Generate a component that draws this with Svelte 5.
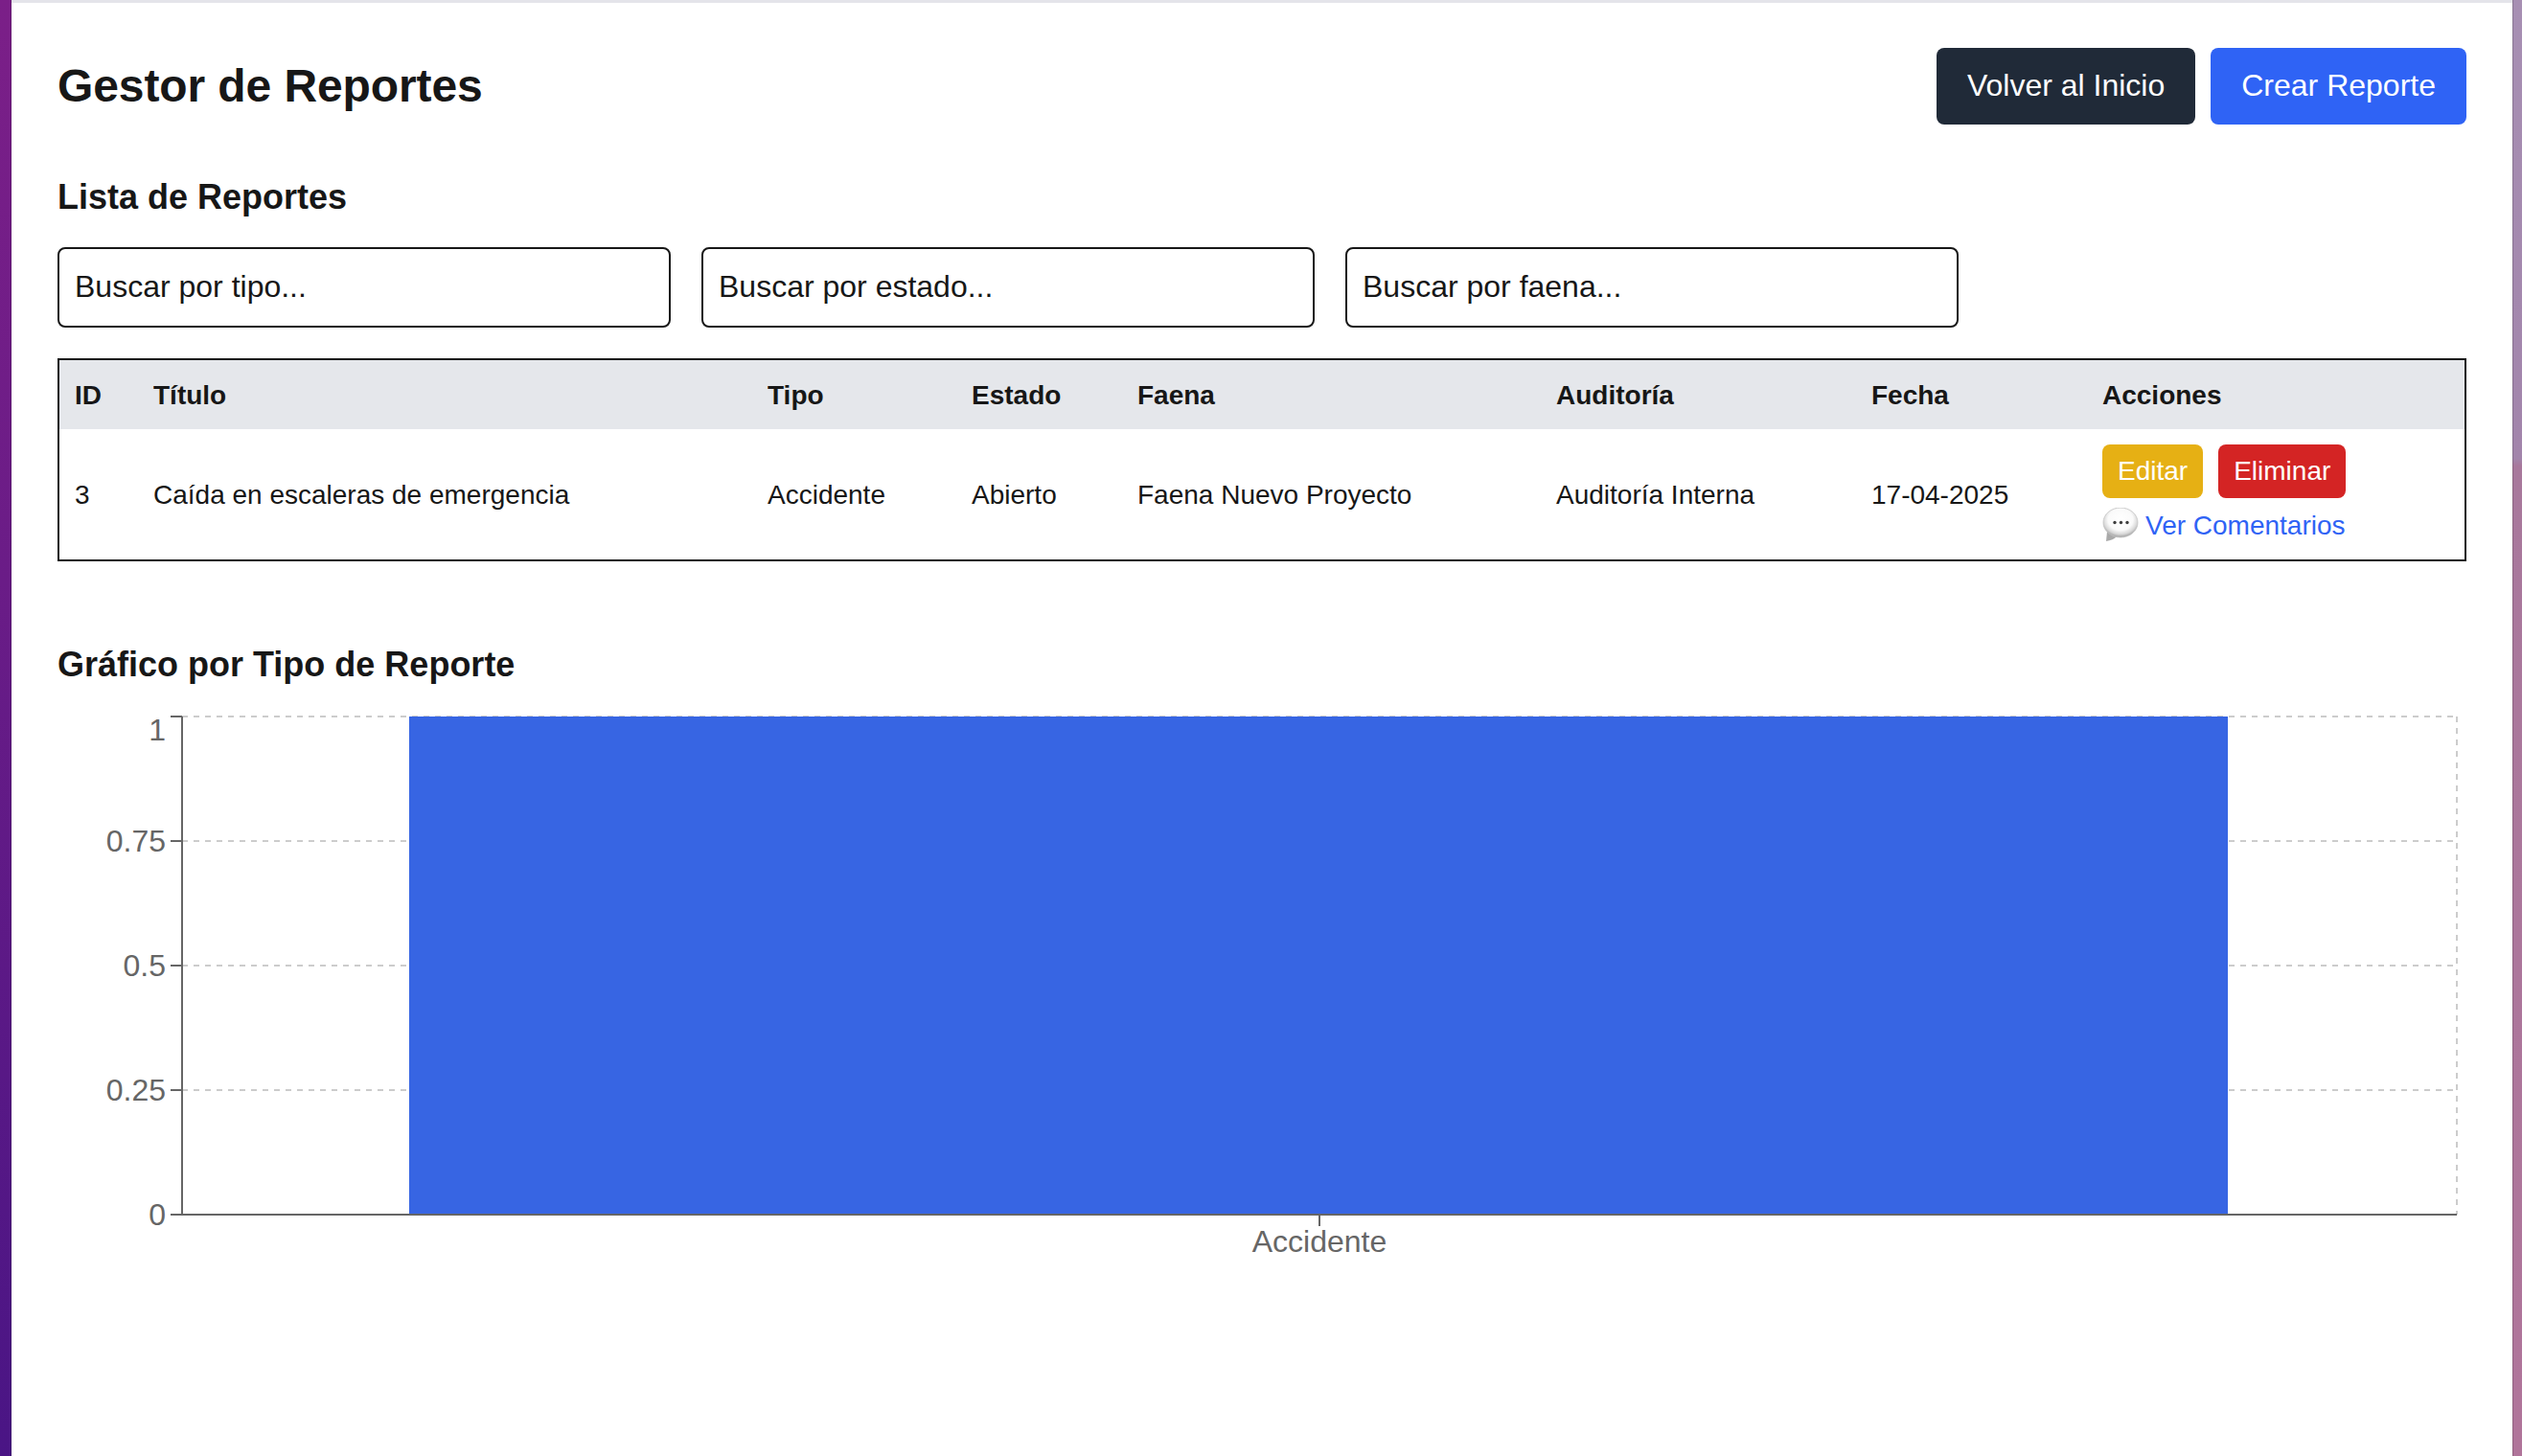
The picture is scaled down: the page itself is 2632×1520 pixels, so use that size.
<script>
  const columns = ['ID', 'Título', 'Tipo', 'Estado', 'Faena', 'Auditoría', 'Fecha', 'Acciones'];
  const row = ['3', 'Caída en escaleras de emergencia', 'Accidente', 'Abierto', 'Faena Nuevo Proyecto', 'Auditoría Interna', '17-04-2025'];
  const placeholders = ['Buscar por tipo...', 'Buscar por estado...', 'Buscar por faena...'];
  const ticks = [
    { label: '1', y: 26, ty: 51 },
    { label: '0.75', y: 156, ty: 167 },
    { label: '0.5', y: 286, ty: 297 },
    { label: '0.25', y: 416, ty: 427 },
    { label: '0', y: 546, ty: 557 }
  ];
</script>

<div class="shell">
  <div class="edge left"></div>
  <main>
    <header>
      <h1>Gestor de Reportes</h1>
      <div class="top-actions">
        <button class="btn dark">Volver al Inicio</button>
        <button class="btn blue">Crear Reporte</button>
      </div>
    </header>

    <h2>Lista de Reportes</h2>
    <div class="filters">
      {#each placeholders as p}
        <input type="text" placeholder={p} />
      {/each}
    </div>

    <div class="table-wrap">
      <table>
        <thead>
          <tr>
            {#each columns as c}<th>{c}</th>{/each}
          </tr>
        </thead>
        <tbody>
          <tr>
            {#each row as cell}<td>{cell}</td>{/each}
            <td class="actions-cell">
              <div class="row-actions">
                <button class="mini yellow">Editar</button>
                <button class="mini red">Eliminar</button>
              </div>
              <div class="comments">
                <svg class="bubble" width="38" height="36" viewBox="0 0 38 36" aria-hidden="true">
                  <defs>
                    <radialGradient id="bub" cx="50%" cy="40%" r="60%">
                      <stop offset="0%" stop-color="#ffffff" />
                      <stop offset="60%" stop-color="#fafafa" />
                      <stop offset="82%" stop-color="#d8d8d8" />
                      <stop offset="100%" stop-color="#9c9c9c" />
                    </radialGradient>
                  </defs>
                  <path d="M5 25 L4 35 Q11 34 16 29.5 Z" fill="#a9a9a9" />
                  <ellipse cx="19" cy="15.5" rx="18" ry="15.5" fill="url(#bub)" stroke="#c4c4c4" stroke-width="0.8" />
                  <circle cx="13" cy="15.5" r="1.7" fill="#3d3d3d" />
                  <circle cx="19.5" cy="15.5" r="1.7" fill="#3d3d3d" />
                  <circle cx="26" cy="15.5" r="1.7" fill="#3d3d3d" />
                </svg>
                <a href="#comentarios">Ver Comentarios</a>
              </div>
            </td>
          </tr>
        </tbody>
      </table>
    </div>

    <h2 class="chart-title">Gráfico por Tipo de Reporte</h2>
    <svg class="chart" width="2514" height="600" viewBox="0 0 2514 600" role="img" aria-label="Gráfico por Tipo de Reporte">
      {#each ticks as t, i}
        {#if i < 4}
          <line class="grid" x1="130" x2="2504" y1={t.y} y2={t.y} />
        {/if}
      {/each}
      <line class="grid" x1="2504" x2="2504" y1="26" y2="546" />
      <rect x="367" y="26" width="1898" height="520" fill="#3765e3" />
      <line class="axis" x1="130" x2="130" y1="26" y2="546" />
      <line class="axis" x1="130" x2="2504" y1="546" y2="546" />
      {#each ticks as t}
        <line class="axis" x1="118" x2="130" y1={t.y} y2={t.y} />
        <text x="113" y={t.ty} text-anchor="end">{t.label}</text>
      {/each}
      <line class="axis" x1="1317" x2="1317" y1="546" y2="558" />
      <text x="1317" y="585" text-anchor="middle">Accidente</text>
    </svg>
  </main>
  <div class="edge right"></div>
</div>

<style>
  :global(body) {
    margin: 0;
    background: #fff;
    font-family: "Liberation Sans", Arial, sans-serif;
    color: #171717;
  }
  .shell {
    display: flex;
    height: 1520px;
    overflow: hidden;
  }
  .edge {
    flex: none;
  }
  .edge.left {
    width: 12px;
    background: linear-gradient(180deg, #7b1f88 0%, #6a1c87 40%, #4a1585 100%);
    box-shadow: inset -1px 0 0 rgba(0, 0, 0, 0.18);
  }
  .edge.right {
    width: 10px;
    background: linear-gradient(180deg, #a78fb3 0%, #a284ab 31.5%, #a8789c 32%, #b0749a 100%);
    box-shadow: inset 1px 0 0 rgba(0, 0, 0, 0.18);
  }
  main {
    flex: 1;
    min-width: 0;
    box-sizing: border-box;
    border-top: 3px solid #e4e4ea;
    padding: 47px 48px 0;
  }
  header {
    display: flex;
    justify-content: space-between;
    align-items: center;
    height: 80px;
    margin-bottom: 48px;
  }
  h1 {
    margin: 0;
    font-size: 48px;
    line-height: 64px;
    font-weight: 700;
    letter-spacing: -0.1px;
    color: #171717;
  }
  h2 {
    margin: 0 0 24px;
    font-size: 36px;
    line-height: 56px;
    font-weight: 700;
    color: #171717;
  }
  .top-actions {
    display: flex;
    gap: 16px;
  }
  button {
    border: none;
    color: #fff;
    font-family: inherit;
    cursor: pointer;
  }
  .btn {
    height: 80px;
    padding: 0 32px 2px;
    border-radius: 8px;
    font-size: 32px;
  }
  .dark {
    background: #202a38;
  }
  .blue {
    background: #2f63f5;
  }
  .filters {
    display: flex;
    gap: 32px;
    margin-bottom: 32px;
  }
  input {
    box-sizing: border-box;
    width: 640px;
    height: 84px;
    padding: 0 16px 2px;
    border: 2px solid #171717;
    border-radius: 8px;
    background: #fff;
    font-family: inherit;
    font-size: 32px;
    color: #171717;
    outline: none;
  }
  input::placeholder {
    color: #171717;
    opacity: 1;
  }
  .table-wrap {
    border: 2px solid #171717;
  }
  table {
    width: 100%;
    table-layout: fixed;
    border-collapse: collapse;
    font-size: 28px;
    line-height: 40px;
  }
  th {
    padding: 17px 16px 15px;
    background: #e5e7eb;
    text-align: left;
    font-weight: 700;
    color: #171717;
  }
  th:nth-child(1) { width: 50px; }
  th:nth-child(2) { width: 609px; }
  th:nth-child(3) { width: 181px; }
  th:nth-child(4) { width: 141px; }
  th:nth-child(5) { width: 405px; }
  th:nth-child(6) { width: 297px; }
  th:nth-child(7) { width: 209px; }
  td {
    padding: 17px 16px 15px;
    vertical-align: middle;
    color: #171717;
    white-space: nowrap;
  }
  td.actions-cell {
    padding: 16px;
  }
  .row-actions {
    display: flex;
    gap: 16px;
  }
  .mini {
    height: 56px;
    padding: 0 16px;
    border-radius: 8px;
    font-size: 28px;
  }
  .yellow {
    background: #e6b014;
  }
  .red {
    background: #d42424;
  }
  .comments {
    display: flex;
    align-items: center;
    gap: 7px;
    height: 40px;
    margin-top: 8px;
  }
  .bubble {
    flex: none;
  }
  .comments a {
    padding-top: 2px;
    color: #2f63f5;
    text-decoration: none;
  }
  .chart-title {
    margin: 80px 0 0;
  }
  .chart {
    display: block;
  }
  .chart text {
    font-family: "Liberation Sans", Arial, sans-serif;
    font-size: 32px;
    fill: #666;
  }
  .grid {
    stroke: #ccc;
    stroke-width: 2;
    stroke-dasharray: 6 6;
  }
  .axis {
    stroke: #666;
    stroke-width: 2;
  }
</style>
